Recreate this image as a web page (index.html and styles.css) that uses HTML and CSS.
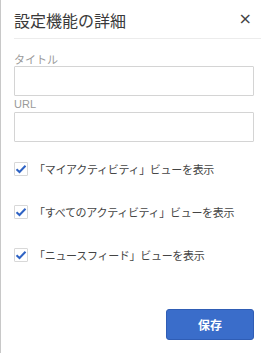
FILE: index.html
```html
<!DOCTYPE html>
<html lang="ja">
<head>
  <meta charset="UTF-8" />
  <meta name="viewport" content="width=device-width, initial-scale=1.0" />
  <title>設定機能の詳細</title>
  <link rel="stylesheet" href="styles.css">
</head>
<body>
  <div class="dialog">
    <div class="dialog-header">
      <h2>設定機能の詳細</h2>
      <span class="close">&times;</span>
    </div>

    <div class="field">
      <label class="label-jp" for="title">タイトル</label>
      <input type="text" id="title" />
    </div>
    <div class="field">
      <label class="label-url" for="url">URL</label>
      <input type="text" id="url" />
    </div>

    <div class="options">
      <label class="option">
        <span class="check">
          <svg width="12" height="10" viewBox="0 0 12 10"><path d="M1.5 5.2 L4.5 8 L10.5 1.8" fill="none" stroke="#2f63c4" stroke-width="2"/></svg>
        </span>
        「マイアクティビティ」ビューを表示
      </label>
      <label class="option">
        <span class="check">
          <svg width="12" height="10" viewBox="0 0 12 10"><path d="M1.5 5.2 L4.5 8 L10.5 1.8" fill="none" stroke="#2f63c4" stroke-width="2"/></svg>
        </span>
        「すべてのアクティビティ」ビューを表示
      </label>
      <label class="option">
        <span class="check">
          <svg width="12" height="10" viewBox="0 0 12 10"><path d="M1.5 5.2 L4.5 8 L10.5 1.8" fill="none" stroke="#2f63c4" stroke-width="2"/></svg>
        </span>
        「ニュースフィード」ビューを表示
      </label>
    </div>

    <div class="footer">
      <button type="button">保存</button>
    </div>
  </div>
</body>
</html>
```

FILE: styles.css
```css
body {
  margin: 0;
  padding: 0;
  background-color: #ffffff;
  font-family: "Noto Sans CJK JP", "Noto Sans", sans-serif;
  color: #333;
}

.dialog {
  height: 353px;
  box-sizing: border-box;
  border-left: 1px solid #c8c8c8;
  padding-left: 13px;
  padding-right: 7px;
}

.dialog-header {
  display: flex;
  align-items: center;
  justify-content: space-between;
  height: 38px;
  border-bottom: 1px solid #ececec;
  margin-right: -7px;
  padding-right: 9px;
}

.dialog-header h2 {
  margin: 0;
  font-size: 16px;
  font-weight: normal;
  color: #3a3a3a;
  line-height: 20px;
  padding-top: 2px;
}

.close {
  font-family: "DejaVu Sans", sans-serif;
  font-size: 16px;
  color: #444;
  line-height: 16px;
}

.field {
  display: flex;
  flex-direction: column;
}

.field label {
  color: #9a9a9a;
  font-size: 11px;
}

.label-jp {
  line-height: 14px;
  margin-top: 13px;
  margin-bottom: 0;
}

.label-url {
  font-family: "Liberation Sans", sans-serif;
  line-height: 10px;
  margin-top: 3px;
  margin-bottom: 3px;
}

.field input {
  height: 30px;
  box-sizing: border-box;
  border: 1px solid #d4d4d4;
  border-radius: 1px;
  background-color: #fff;
}

.options {
  margin-top: 20px;
  display: flex;
  flex-direction: column;
  gap: 29px;
}

.option {
  display: flex;
  align-items: center;
  gap: 6px;
  font-size: 11px;
  letter-spacing: -0.3px;
  color: #444;
  height: 14px;
}

.check {
  width: 14px;
  height: 14px;
  box-sizing: border-box;
  border: 1px solid #d8d8d8;
  border-radius: 1px;
  display: flex;
  align-items: center;
  justify-content: center;
}

.footer {
  display: flex;
  justify-content: flex-end;
  margin-top: 47px;
}

.footer button {
  width: 88px;
  height: 31px;
  background-color: #3a6dca;
  border: 1px solid #2f5db5;
  border-radius: 3px;
  color: #fff;
  font-family: "Noto Sans CJK JP", sans-serif;
  font-size: 12px;
  font-weight: bold;
}
```
